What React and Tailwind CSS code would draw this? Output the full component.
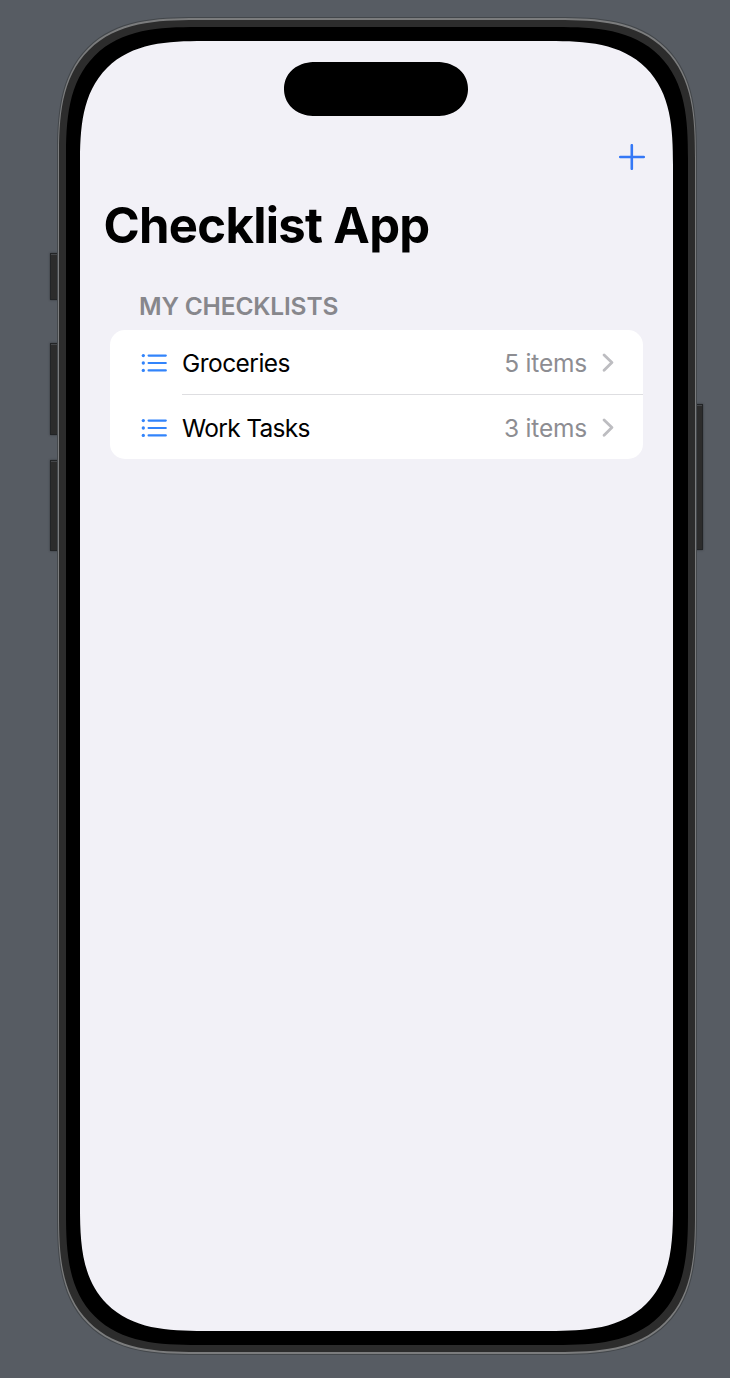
import React from "react";

const lists = [
  { name: "Groceries", count: "5 items", nameSpacing: "tracking-[-0.54px]" },
  { name: "Work Tasks", count: "3 items", nameSpacing: "tracking-[-0.68px]" },
];

function ListIcon() {
  return (
    <svg width="26" height="20" viewBox="0 0 26 20" className="shrink-0" fill="none" stroke="#3284fb" strokeWidth="2.2" strokeLinecap="round">
      <path d="M7.6 2.6H24.8M7.6 10H24.8M7.6 17.4H24.8" />
      <g fill="#3284fb" stroke="none">
        <circle cx="2.3" cy="2.6" r="1.65" />
        <circle cx="2.3" cy="10" r="1.65" />
        <circle cx="2.3" cy="17.4" r="1.65" />
      </g>
    </svg>
  );
}

function Chevron() {
  return (
    <svg width="12" height="20" viewBox="0 0 12 20" className="shrink-0" fill="none" stroke="#bdbdc1" strokeWidth="2.8" strokeLinecap="round" strokeLinejoin="round">
      <path d="M2.1 1.9L9.9 9.6L2.1 17.3" />
    </svg>
  );
}

function Row({ item, last }) {
  return (
    <li className={last ? "flex h-[64px] pl-[31px]" : "flex h-[65px] pl-[31px]"}>
      <div className="flex w-[41.5px] items-center pt-[1px]">
        <ListIcon />
      </div>
      <div className={last ? "flex flex-1 items-center pr-[29.5px] pt-[2px]" : "flex flex-1 items-center border-b border-[#dedee1] pr-[29.5px] pt-[2px]"}>
        <span className={"flex-1 text-[24.5px] leading-[30px] text-black " + item.nameSpacing}>{item.name}</span>
        <span className="mr-[14.5px] text-[24.5px] leading-[30px] tracking-[-0.2px] text-[#8d8d92]">{item.count}</span>
        <Chevron />
      </div>
    </li>
  );
}

function SideButton({ place }) {
  return <span className={"absolute border border-[#222426] bg-[#2c2c2c] shadow-[inset_0_1px_0_#45474a,0_0_2px_#33363a] " + place} />;
}

export default function App() {
  return (
    <main className="relative h-[1378px] w-[730px] overflow-hidden bg-[#575c63] pt-[17px] pl-[56.5px] font-['Inter','Liberation_Sans',sans-serif]">
      <SideButton place="left-[50px] top-[253px] h-[47px] w-[10px]" />
      <SideButton place="left-[50px] top-[343px] h-[92px] w-[10px]" />
      <SideButton place="left-[50px] top-[460px] h-[91px] w-[10px]" />
      <SideButton place="left-[694px] top-[404px] h-[146px] w-[9px]" />
      <div className="relative h-[1337.5px] w-[640.5px] rounded-[140px] bg-[#43474b] p-px [corner-shape:superellipse(1.5)]">
        <div className="h-full rounded-[139px] bg-[#7b7c7d] p-[1.5px] [corner-shape:superellipse(1.5)]">
          <div className="h-full rounded-[138px] bg-[#2c2c2c] p-[7px] [corner-shape:superellipse(1.5)]">
            <div className="h-full rounded-[132px] bg-black pt-[14.5px] pr-[14.5px] pb-[14px] pl-[14px] [corner-shape:superellipse(1.5)]">
              <div className="flex h-full flex-col overflow-hidden rounded-[124px] bg-[#f2f1f7] pt-[21px] [corner-shape:superellipse(1.5)]">
                <div className="ml-[204px] h-[53.5px] w-[184px] shrink-0 rounded-[31px/27px] bg-black [corner-shape:superellipse(1.08)]" />
                <div className="mt-[28.5px] flex h-[26px] justify-end pr-[28px]">
                  <button aria-label="Add checklist">
                    <svg width="26" height="26" viewBox="0 0 26 26" fill="none" stroke="#3478f6" strokeWidth="2.6" strokeLinecap="round">
                      <path d="M12.8 1.2V24.8M1.2 13H24.8" />
                    </svg>
                  </button>
                </div>
                <h1 className="mt-[26px] ml-[23.5px] text-[49px] leading-[60px] font-bold tracking-[-0.7px] text-black">Checklist App</h1>
                <section className="mr-[30px] ml-[29.5px] mt-[33px]">
                  <h2 className="ml-[29.5px] h-[41px] text-[24.5px] leading-[35px] font-[560] tracking-[-0.17px] text-[#87878c]">MY CHECKLISTS</h2>
                  <ul className="overflow-hidden rounded-[15px] bg-white">
                    {lists.map((item, i) => (
                      <Row key={item.name} item={item} last={i === lists.length - 1} />
                    ))}
                  </ul>
                </section>
              </div>
            </div>
          </div>
        </div>
      </div>
    </main>
  );
}
